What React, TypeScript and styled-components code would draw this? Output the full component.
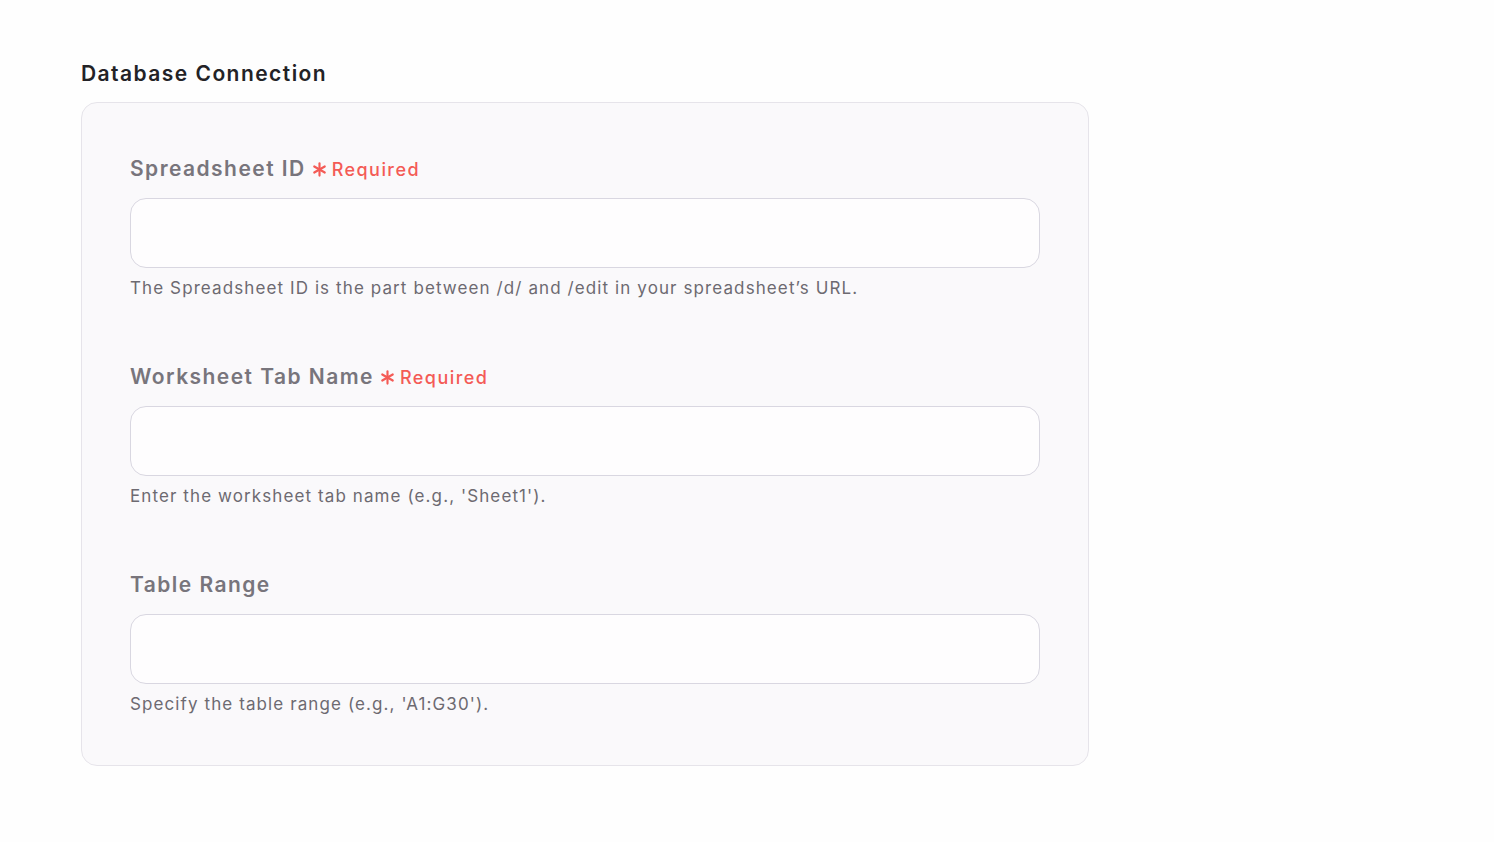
import styled, { createGlobalStyle } from 'styled-components';

const GlobalStyle = createGlobalStyle`
  html, body {
    margin: 0;
    padding: 0;
    background: #fefefe;
    font-family: Inter, "Noto Sans", sans-serif;
  }
`;

const Page = styled.main`
  padding: 61px 0 0 81px;
  width: 1008px;
`;

const Title = styled.h2`
  margin: 0 0 15px;
  font-size: 21px;
  font-weight: 600;
  letter-spacing: 1.45px;
  line-height: 26px;
  color: #232226;
`;

const Card = styled.section`
  display: flex;
  flex-direction: column;
  gap: 62px;
  padding: 50px 48px 50px;
  background: #faf9fb;
  border: 1px solid #e6e4ea;
  border-radius: 16px;
`;

const Field = styled.div`
  display: flex;
  flex-direction: column;
`;

const Label = styled.label`
  display: flex;
  align-items: center;
  gap: 6px;
  height: 30px;
  margin-bottom: 15px;
  font-size: 21px;
  font-weight: 600;
  letter-spacing: 1.45px;
  color: #78757c;
`;

const Required = styled.span`
  display: inline-flex;
  align-items: center;
  gap: 5px;
  font-size: 18px;
  font-weight: 500;
  letter-spacing: 1.45px;
  color: #f45b56;
  padding-top: 2px;
`;

const Input = styled.input`
  box-sizing: border-box;
  height: 70px;
  width: 100%;
  padding: 0 20px;
  font: inherit;
  font-size: 17px;
  background: #fefdfe;
  border: 1px solid #d9d7e1;
  border-radius: 16px;
  outline: none;
`;

const Help = styled.p`
  margin: 9px 0 0;
  font-size: 17px;
  line-height: 22px;
  letter-spacing: 1.1px;
  color: #6d6a71;
`;

function Star() {
  return (
    <svg width="15" height="15" viewBox="0 0 16 16" aria-hidden="true">
      <g stroke="#f45b56" strokeWidth="2.3" strokeLinecap="round">
        <line x1="8" y1="1.5" x2="8" y2="14.5" />
        <line x1="2.4" y1="4.75" x2="13.6" y2="11.25" />
        <line x1="2.4" y1="11.25" x2="13.6" y2="4.75" />
      </g>
    </svg>
  );
}

const fields = [
  {
    label: 'Spreadsheet ID',
    required: true,
    help: 'The Spreadsheet ID is the part between /d/ and /edit in your spreadsheet\u2019s URL.',
  },
  {
    label: 'Worksheet Tab Name',
    required: true,
    help: "Enter the worksheet tab name (e.g., 'Sheet1').",
  },
  {
    label: 'Table Range',
    required: false,
    help: "Specify the table range (e.g., 'A1:G30').",
  },
];

export default function App() {
  return (
    <>
      <GlobalStyle />
      <Page>
        <Title>Database Connection</Title>
        <Card>
          {fields.map((f) => (
            <Field key={f.label}>
              <Label>
                {f.label}
                {f.required && (
                  <Required>
                    <Star />
                    Required
                  </Required>
                )}
              </Label>
              <Input type="text" />
              <Help>{f.help}</Help>
            </Field>
          ))}
        </Card>
      </Page>
    </>
  );
}
